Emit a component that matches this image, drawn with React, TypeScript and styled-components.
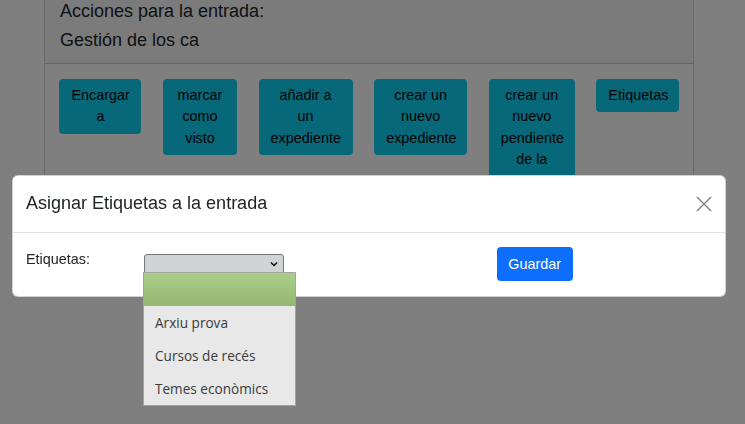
import React from "react";
import styled, { createGlobalStyle } from "styled-components";

const Global = createGlobalStyle`
  html, body { margin: 0; padding: 0; background: #fff; }
  body {
    font-family: "Liberation Sans", Arial, sans-serif;
    font-size: 14.4px;
    line-height: 1.5;
    color: #212529;
    overflow: hidden;
    height: 424px;
  }
  * { box-sizing: border-box; }
`;

const Page = styled.div`
  padding-left: 44px;
  margin-top: -12px;
`;

const Card = styled.div`
  width: 650px;
  border: 1px solid rgba(0, 0, 0, 0.175);
  border-radius: 6px;
  background: #fff;
`;

const CardHeader = styled.div`
  padding: 8px 15px;
  background: rgba(0, 0, 0, 0.03);
  border-bottom: 1px solid rgba(0, 0, 0, 0.175);
`;

const HeaderLine = styled.div`
  font-size: 18px;
  line-height: 28.8px;
`;

const CardBody = styled.div`
  padding: 15px 14.4px 14.4px;
  display: flex;
  align-items: flex-start;
  gap: 21.6px;
`;

const ActionButton = styled.div<{ $w: number }>`
  width: ${(p) => p.$w}px;
  flex: none;
  background: #0fd0f2;
  color: #000;
  border-radius: 4px;
  padding: 6px 12px;
  font-size: 14.4px;
  line-height: 21.6px;
  text-align: center;
`;

const Backdrop = styled.div`
  position: fixed;
  inset: 0;
  background: rgba(0, 0, 0, 0.5);
`;

const ModalLayer = styled.div`
  position: fixed;
  inset: 0;
  padding: 175px 0 0 12px;
`;

const Modal = styled.div`
  width: 714px;
  background: #fff;
  border: 1px solid rgba(0, 0, 0, 0.175);
  border-radius: 6px;
`;

const ModalHeader = styled.div`
  display: flex;
  align-items: center;
  justify-content: space-between;
  padding: 14.4px 14.4px 14.4px 13px;
  border-bottom: 1px solid #dee2e6;
`;

const ModalTitle = styled.div`
  font-size: 18px;
  line-height: 27px;
`;

const CloseButton = styled.div`
  width: 16px;
  height: 16px;
  margin-right: -1px;
  display: flex;
  opacity: 0.5;
`;

const ModalBody = styled.div`
  padding: 14.4px 14.4px 14.4px 13px;
`;

const FormRow = styled.div`
  display: flex;
  margin: 0 -10.8px;
`;

const Col = styled.div<{ $span: number }>`
  width: ${(p) => (p.$span / 12) * 100}%;
  padding: 0 10.8px;
  flex: none;
  position: relative;
`;

const Label = styled.div`
  padding-top: 2px;
  font-size: 14.4px;
  line-height: 21.6px;
`;

const FakeSelect = styled.div`
  margin-top: 7px;
  width: 140px;
  height: 20px;
  background: #d2d3d7;
  border: 1px solid #767676;
  border-radius: 3px;
  display: flex;
  align-items: center;
  justify-content: flex-end;
  padding-right: 5px;
`;

const SaveButton = styled.div`
  display: inline-block;
  background: #0d6efd;
  color: #fff;
  border-radius: 4px;
  padding: 6px 11.5px;
  font-size: 14.4px;
  line-height: 22px;
`;

const Dropdown = styled.div`
  position: fixed;
  left: 143px;
  top: 272px;
  width: 153px;
  background: #e8e8e8;
  border: 1px solid #a3a3a3;
  font-family: "Open Sans", "Noto Sans", sans-serif;
  font-size: 13.6px;
  color: #3b3b3b;
`;

const Option = styled.div<{ $selected?: boolean }>`
  height: 33px;
  display: flex;
  align-items: center;
  padding: 2px 0 0 11px;
  background: ${(p) =>
    p.$selected ? "linear-gradient(#aacd88, #94b871)" : "transparent"};
`;

const buttons: { label: string; w: number }[] = [
  { label: "Encargar a", w: 82 },
  { label: "marcar como visto", w: 74 },
  { label: "añadir a un expediente", w: 94 },
  { label: "crear un nuevo expediente", w: 93 },
  { label: "crear un nuevo pendiente de la entrada", w: 86 },
  { label: "Etiquetas", w: 83 },
];

export default function App() {
  return (
    <>
      <Global />
      <Page>
        <Card>
          <CardHeader>
            <HeaderLine>Acciones para la entrada:</HeaderLine>
            <HeaderLine>Gestión de los ca</HeaderLine>
          </CardHeader>
          <CardBody>
            {buttons.map((b) => (
              <ActionButton key={b.label} $w={b.w}>
                {b.label}
              </ActionButton>
            ))}
          </CardBody>
        </Card>
      </Page>
      <Backdrop />
      <ModalLayer>
        <Modal>
          <ModalHeader>
            <ModalTitle>Asignar Etiquetas a la entrada</ModalTitle>
            <CloseButton>
              <svg width="16" height="16" viewBox="0 0 16 16">
                <path
                  d="M1 1L15 15M15 1L1 15"
                  stroke="#000"
                  strokeWidth="1.4"
                  fill="none"
                />
              </svg>
            </CloseButton>
          </ModalHeader>
          <ModalBody>
            <FormRow>
              <Col $span={2}>
                <Label>Etiquetas:</Label>
              </Col>
              <Col $span={6}>
                <FakeSelect>
                  <svg width="8" height="6" viewBox="0 0 8 6">
                    <path
                      d="M1 1.5L4 4.5L7 1.5"
                      stroke="#111"
                      strokeWidth="1.5"
                      fill="none"
                    />
                  </svg>
                </FakeSelect>
              </Col>
              <Col $span={4}>
                <SaveButton>Guardar</SaveButton>
              </Col>
            </FormRow>
          </ModalBody>
        </Modal>
      </ModalLayer>
      <Dropdown>
        <Option $selected />
        <Option>Arxiu prova</Option>
        <Option>Cursos de recés</Option>
        <Option>Temes econòmics</Option>
      </Dropdown>
    </>
  );
}
